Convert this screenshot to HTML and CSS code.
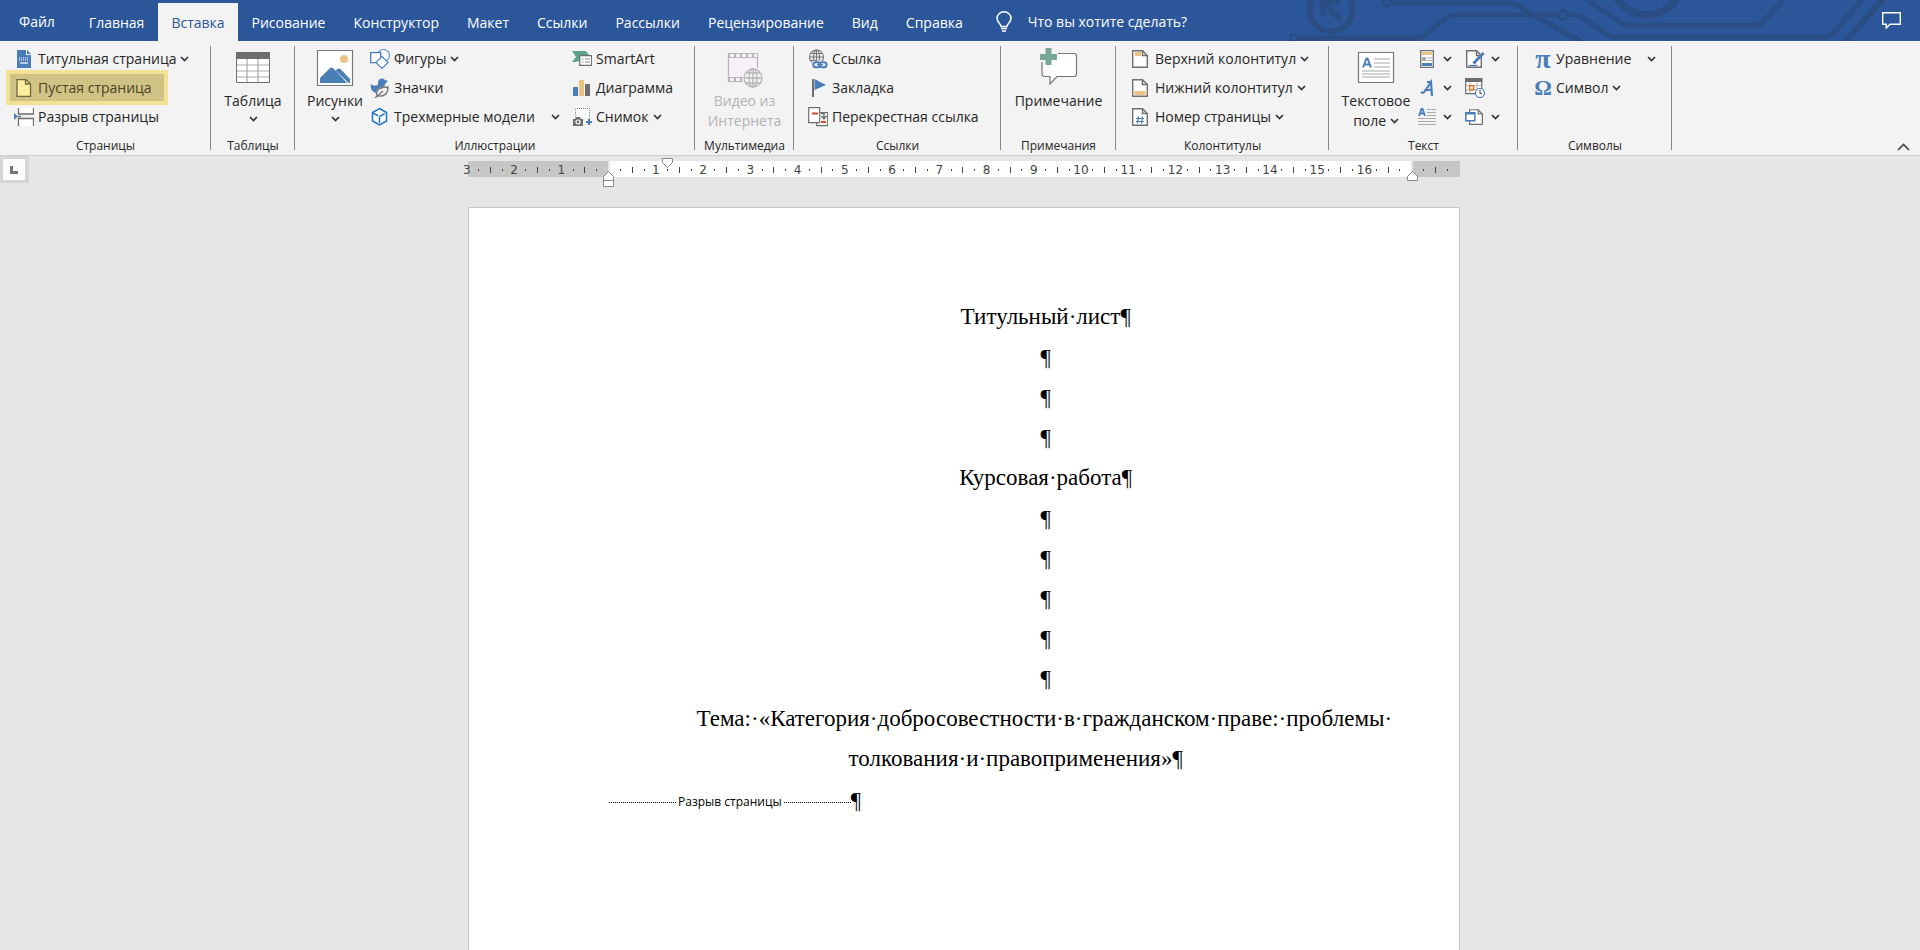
FILE: index.html
```
<!DOCTYPE html>
<html lang="ru">
<head>
<meta charset="utf-8">
<title>Курсовая работа</title>
<link rel="stylesheet" href="styles.css">
</head>
<body>
<svg class="defs" aria-hidden="true">
  <symbol id="chev" viewBox="0 0 9 6"><path d="M1 1l3.500 3.500L8 1" fill="none" stroke="#333" stroke-width="1.700"/></symbol>
  <symbol id="sheet" viewBox="0 0 16 18"><path d="M.7.700h9.800l4.800 4.800v11.800H.7z" fill="#fff" stroke="#6e6e6e" stroke-width="1.400"/><path d="M10.500.700v4.800h4.800" fill="none" stroke="#6e6e6e" stroke-width="1.400"/></symbol>
</svg>

<header class="titlebar">
  <svg class="circuit" viewBox="0 0 640 41" aria-hidden="true">
    <g fill="none" stroke="#2a4e84" stroke-width="5">
      <circle cx="51" cy="10" r="21.500" stroke-width="6"/>
      <path d="M61 20L43 2M43-4v20M40 2h20" stroke-width="6"/>
      <circle cx="107" cy="2" r="4" stroke-width="3"/>
      <path d="M112 3h116q6 0 12 4l63 36"/>
      <circle cx="14" cy="38" r="4" stroke-width="3"/>
      <path d="M19 38h122L166 18q5-3 9-3h102"/>
      <circle cx="283" cy="15" r="4.500" stroke-width="3.500"/>
      <path d="M289 15q10-1 17 5l25 17h214q4 0 6-2L583-1"/>
      <path d="M306-1l34 23q4 3 8 3h128q4 0 6-2L504-1"/>
      <circle cx="367" cy="-20" r="35" stroke-width="8"/>
      <path d="M603-1L565 42" stroke-width="6"/>
    </g>
  </svg>
  <nav class="tabs">
    <button class="tab tab-file">Файл</button>
    <button class="tab">Главная</button>
    <button class="tab active">Вставка</button>
    <button class="tab">Рисование</button>
    <button class="tab">Конструктор</button>
    <button class="tab">Макет</button>
    <button class="tab">Ссылки</button>
    <button class="tab">Рассылки</button>
    <button class="tab">Рецензирование</button>
    <button class="tab">Вид</button>
    <button class="tab">Справка</button>
  </nav>
  <button class="tell">
    <svg width="16" height="22" viewBox="0 0 16 22"><path d="M5 15.500c0-3-4-4-4-8.200a7 6.500 0 0 1 14 0c0 4.200-4 5.200-4 8.200z" fill="none" stroke="#fff" stroke-width="1.500"/><path d="M5 17.500h6M6 20h4" stroke="#fff" stroke-width="1.500"/></svg>
    <span>Что вы хотите сделать?</span>
  </button>
  <button class="comments" aria-label="Примечания">
    <svg width="19" height="17" viewBox="0 0 19 17"><path d="M.7.700h17.600v11.600H8l-3.800 3.800v-3.800H.7z" fill="none" stroke="#fff" stroke-width="1.400"/></svg>
  </button>
</header>

<section class="ribbon">
  <div class="group g-pages">
    <div class="body">
      <div class="rows">
        <button class="cmd"><svg width="20" height="20" viewBox="0 0 20 20"><path d="M3 1h9v5h5v13H3z" fill="#4a7ebb"/><path d="M13 1l4 4h-4z" fill="#4a7ebb"/><path d="M5 9h10M5 11h10" stroke="#fff" stroke-width="1.200" stroke-dasharray="1 1"/><path d="M6 14h8" stroke="#fff" stroke-width="1.200"/></svg>Титульная страница<svg class="chev"><use href="#chev"/></svg></button>
        <button class="cmd marked"><svg width="20" height="20" viewBox="0 0 20 20"><path d="M3 1.700h9l4.500 4.300v12.300H3z" fill="#ffef9f" stroke="#6e6845" stroke-width="1.300"/><path d="M11.500 1.700V6h5" fill="none" stroke="#6e6845" stroke-width="1.300"/></svg>Пустая страница</button>
        <button class="cmd"><svg width="20" height="20" viewBox="0 0 20 20"><path d="M0 6l4 3.500L0 13z" fill="#4a7ebb"/><path d="M5 1h14v6H5zM5 12h14v7H5z" fill="#fff"/><path d="M4.500 1v6h15V1M4.500 19v-7.500h15V19M4 9.500h3" fill="none" stroke="#6e6e6e" stroke-width="1.300"/></svg>Разрыв страницы</button>
      </div>
    </div>
    <h2>Страницы</h2>
  </div>

  <div class="group g-tables">
    <div class="body">
      <button class="big"><svg width="38" height="40" viewBox="0 0 38 40"><path d="M2.500 4.500h33v30h-33z" fill="#fff" stroke="#6e6e6e"/><path d="M2 4h34v7H2z" fill="#6e6e6e"/><path d="M3 17h32M3 23h32M3 29h32M13 11v23M24 11v23" stroke="#aaa" stroke-width="1.200"/></svg><span>Таблица</span><svg class="chev"><use href="#chev"/></svg></button>
    </div>
    <h2>Таблицы</h2>
  </div>

  <div class="group g-art">
    <div class="body">
      <button class="big"><svg width="38" height="40" viewBox="0 0 38 40"><path d="M1.500 2.500h35v35h-35z" fill="#fff" stroke="#777" stroke-width="1.200"/><circle cx="28" cy="11" r="4" fill="#eac282"/><path d="M4 35v-5l10-10q1.500-1 3 0l14 15zM19.500 22.500l2-1.500q1.500-1 3 0L34 31v4h-1.500z" fill="#4a7fb5"/></svg><span>Рисунки</span><svg class="chev"><use href="#chev"/></svg></button>
      <div class="rows col-shapes">
        <button class="cmd"><svg width="20" height="20" viewBox="0 0 20 20"><circle cx="13.500" cy="6.500" r="6" fill="#fff" stroke="#6b9ccb" stroke-width="1.200"/><path d="M.7 3.700h10v10H.7z" fill="#fff" stroke="#4a7ebb" stroke-width="1.300"/><path d="M12 7.500l6 6-6 6-6-6z" fill="#fff" stroke="#5b8cc4" stroke-width="1.300"/></svg>Фигуры<svg class="chev"><use href="#chev"/></svg></button>
        <button class="cmd"><svg width="20" height="20" viewBox="0 0 20 20"><path d="M1 6c2 2 4 2 7 1C7 1 12-1 15 2l3 1-3 3c0 2-1 3-3 3-4 1-6 3-6 6-4-1-6-5-5-9z" fill="#4a7ebb"/><path d="M7 18c-2-6 3-9 11-9 0 6-3 10-11 9M5 20l8-7" fill="#f3f3f3" stroke="#777" stroke-width="1.400"/></svg>Значки</button>
        <button class="cmd"><svg width="20" height="20" viewBox="0 0 20 20"><path d="M9.500 1.500L16.500 5.500v8.500l-7 4-7-4V5.500z" fill="#fff" stroke="#1e73be" stroke-width="1.500"/><path d="M3 6l6.500 3.500V17M9.500 9.500L16 6" fill="none" stroke="#1e73be" stroke-width="1.500" stroke-dasharray="6 2"/></svg>Трехмерные модели<svg class="chev far"><use href="#chev"/></svg></button>
      </div>
      <div class="rows">
        <button class="cmd"><svg width="20" height="20" viewBox="0 0 20 20"><path d="M0 2h14l3 4H7v6l-3 1H0l4-5z" fill="#5da38a"/><path d="M7.700 6.700h12v9.600h-12z" fill="#fff" stroke="#6e6e6e" stroke-width="1.300"/><path d="M10 10h1.500M13 10h5M10 13h1.500M13 13h5" stroke="#888"/></svg>SmartArt</button>
        <button class="cmd"><svg width="20" height="20" viewBox="0 0 20 20"><path d="M1 9h5v9H1z" fill="#4a7ebb"/><path d="M7 2h5v16H7z" fill="#eac282"/><path d="M13 6h5v12h-5z" fill="#6e6e6e"/></svg>Диаграмма</button>
        <button class="cmd"><svg width="20" height="20" viewBox="0 0 20 20"><path d="M3.500 10V1.500h14V12" fill="#fafafa" stroke="#888" stroke-dasharray="1 1"/><path d="M1 12h2l1-2h4l1 2h2v7H1z" fill="#6e6e6e"/><circle cx="6" cy="15" r="2" fill="#6e6e6e" stroke="#fff" stroke-width="1.200"/><path d="M14 15h6M17 12v6" stroke="#4a7ebb" stroke-width="2"/></svg>Снимок<svg class="chev"><use href="#chev"/></svg></button>
      </div>
    </div>
    <h2>Иллюстрации</h2>
  </div>

  <div class="group g-media">
    <div class="body">
      <button class="big" disabled><svg width="38" height="40" viewBox="0 0 38 40"><path d="M3.500 5.500h29v28h-29z" fill="#f7f1f7" stroke="#b8b4b8" stroke-width="1.200"/><path d="M3 7.500h30M3 31.500h15" stroke="#b8b4b8" stroke-width="5"/><path d="M5 7.500h27M5 31.500h13" stroke="#f7f1f7" stroke-width="3" stroke-dasharray="4 2"/><path d="M18 20h20v20H18z" fill="#f3f3f3"/><g fill="none" stroke="#b8b4b8" stroke-width="1.300"><circle cx="28" cy="30" r="9"/><ellipse cx="28" cy="30" rx="4" ry="9"/><path d="M19 30h18M21 25h14M21 35h14M28 21v18"/></g></svg><span>Видео из<br>Интернета</span></button>
    </div>
    <h2>Мультимедиа</h2>
  </div>

  <div class="group g-links">
    <div class="body">
      <div class="rows">
        <button class="cmd"><svg width="20" height="20" viewBox="0 0 20 20"><g fill="none" stroke="#777" stroke-width="1.200"><circle cx="8.500" cy="8" r="7"/><ellipse cx="8.500" cy="8" rx="3" ry="7"/><path d="M1.500 8h14M3 4.500h11M3 11.500h5M8.500 1v13"/></g><rect x="4" y="12" width="16" height="8" fill="#f3f3f3"/><rect x="5.200" y="13.200" width="7" height="5" rx="2.500" fill="none" stroke="#4a7ebb" stroke-width="2"/><rect x="11.500" y="13.200" width="7" height="5" rx="2.500" fill="none" stroke="#4a7ebb" stroke-width="2"/><path d="M9 15.700h6" stroke="#4a7ebb" stroke-width="1.500"/></svg>Ссылка</button>
        <button class="cmd"><svg width="20" height="20" viewBox="0 0 20 20"><path d="M5 1v18" stroke="#6e6e6e" stroke-width="2"/><path d="M6.500 1L18 7 6.500 12z" fill="#4a7ebb"/></svg>Закладка</button>
        <button class="cmd"><svg width="20" height="20" viewBox="0 0 20 20"><path d="M8.700 5.700h11v13h-11z" fill="#fff" stroke="#6e6e6e" stroke-width="1.200"/><path d="M.7.700h11v15H.7z" fill="#fff" stroke="#6e6e6e" stroke-width="1.200"/><path d="M4 6.500h6M13 15h5" stroke="#d24726" stroke-width="2"/><path d="M13 6.500h3V11M13.500 9l2.500 3 2.500-3" fill="none" stroke="#6e6e6e" stroke-width="1.400"/></svg>Перекрестная ссылка</button>
      </div>
    </div>
    <h2>Ссылки</h2>
  </div>

  <div class="group g-notes">
    <div class="body">
      <button class="big"><svg width="38" height="40" viewBox="0 0 38 40"><path d="M18 5.500h16q2.500 0 2.500 2.500v18q0 2.500-2.500 2.500H17l-7 7.500v-7.500H5q-3 0-3-2.500V14l6 4z" fill="#fff"/><path d="M18 5.500h16q2.500 0 2.500 2.500v18q0 2.500-2.500 2.500H17l-7 7.500v-7.500H5q-3 0-3-2.500V14" fill="none" stroke="#777" stroke-width="1.200"/><path d="M0 9h17M8.500 0v17" stroke="#76a797" stroke-width="6"/></svg><span>Примечание</span></button>
    </div>
    <h2>Примечания</h2>
  </div>

  <div class="group g-heads">
    <div class="body">
      <div class="rows">
        <button class="cmd"><svg width="20" height="20" viewBox="0 0 20 20"><use href="#sheet" x="1" y="1" width="16" height="18"/><path d="M4 3h6v4H4z" fill="#eac282"/></svg>Верхний колонтитул<svg class="chev"><use href="#chev"/></svg></button>
        <button class="cmd"><svg width="20" height="20" viewBox="0 0 20 20"><use href="#sheet" x="1" y="1" width="16" height="18"/><path d="M3.500 13h11v4h-11z" fill="#eac282"/></svg>Нижний колонтитул<svg class="chev"><use href="#chev"/></svg></button>
        <button class="cmd"><svg width="20" height="20" viewBox="0 0 20 20"><use href="#sheet" x="1" y="1" width="16" height="18"/><path d="M7.500 9.500l-1 7M11.500 9.500l-1 7M5 11.500h8M5 14.500h8" stroke="#4a7ebb" stroke-width="1.200"/></svg>Номер страницы<svg class="chev"><use href="#chev"/></svg></button>
      </div>
    </div>
    <h2>Колонтитулы</h2>
  </div>

  <div class="group g-text">
    <div class="body">
      <button class="big"><svg width="38" height="40" viewBox="0 0 38 40"><path d="M1.500 4.500h35v30h-35z" fill="#fff" stroke="#777" stroke-width="1.200"/><path d="M6 19.500l3.500-9h1l3.500 9M7.500 16.500h5" fill="none" stroke="#4a7ebb" stroke-width="2"/><path d="M17 11h16M17 15h16M17 19h16M5 23h28M5 26h28M5 29h28" stroke="#aaa" stroke-width="1.200"/></svg><span>Текстовое<br>поле <svg class="chev"><use href="#chev"/></svg></span></button>
      <div class="rows">
        <button class="cmd icon" aria-label="Экспресс-блоки"><svg width="20" height="20" viewBox="0 0 20 20"><path d="M3.700 1.700h12.600v16.600H3.700z" fill="#fff" stroke="#6e6e6e" stroke-width="1.300"/><path d="M5 3h10v3H5z" fill="#eac282"/><path d="M5 8h4v4H5z" fill="#aaa"/><path d="M10 9h5M10 11.500h5" stroke="#aaa"/><path d="M5 14h10v3H5z" fill="#4a7ebb"/></svg><svg class="chev"><use href="#chev"/></svg></button>
        <button class="cmd icon" aria-label="WordArt"><svg width="20" height="20" viewBox="0 0 20 20"><path d="M4 14q2 2 4-1l6-9 1 14M7 12.500l8-1M10 4h4" fill="none" stroke="#4a7ebb" stroke-width="2.200"/></svg><svg class="chev"><use href="#chev"/></svg></button>
        <button class="cmd icon" aria-label="Буквица"><svg width="20" height="20" viewBox="0 0 20 20"><path d="M2 9l2.500-7h1L8 9M3 6.500h4" fill="none" stroke="#4a7ebb" stroke-width="1.800"/><path d="M10 2.500h9M10 5.500h9M10 8.500h9M1 11.500h18M1 14.500h18M1 17.500h18" stroke="#aaa" stroke-width="1.200"/></svg><svg class="chev"><use href="#chev"/></svg></button>
      </div>
      <div class="rows">
        <button class="cmd icon" aria-label="Строка подписи"><svg width="20" height="20" viewBox="0 0 20 20"><use href="#sheet" x="1" y="1" width="16" height="18"/><path d="M8.500 14.500L18.500 4" stroke="#4a7ebb" stroke-width="3"/><path d="M3.500 16.500h9" stroke="#4a7ebb" stroke-width="1.300"/></svg><svg class="chev"><use href="#chev"/></svg></button>
        <button class="cmd icon" aria-label="Дата и время"><svg width="20" height="20" viewBox="0 0 20 20"><path d="M.7 1.700h16v14H.7z" fill="#fff" stroke="#6e6e6e" stroke-width="1.200"/><path d="M0 0h17.400v4H0z" fill="#6e6e6e"/><path d="M1 7.500h15M1 12h15M5 4v11M12 4v11" stroke="#bbb"/><path d="M4.700 7.700h4v4h-4z" fill="#fff" stroke="#e8731a" stroke-width="1.400"/><circle cx="15" cy="15" r="4.500" fill="#fff" stroke="#4a7ebb" stroke-width="1.200"/><path d="M15 12v3.500h2" fill="none" stroke="#444"/></svg></button>
        <button class="cmd icon" aria-label="Объект"><svg width="20" height="20" viewBox="0 0 20 20"><use href="#sheet" x="4" y="1" width="14" height="18"/><path d="M.8 5.800h9v8h-9z" fill="#fff" stroke="#4a7ebb" stroke-width="1.500"/><path d="M1 6.500h9" stroke="#4a7ebb" stroke-width="2"/></svg><svg class="chev"><use href="#chev"/></svg></button>
      </div>
    </div>
    <h2>Текст</h2>
  </div>

  <div class="group g-symbols">
    <div class="body">
      <div class="rows">
        <button class="cmd"><span class="glyph pi">π</span>Уравнение<svg class="chev far"><use href="#chev"/></svg></button>
        <button class="cmd"><span class="glyph">Ω</span>Символ<svg class="chev"><use href="#chev"/></svg></button>
      </div>
    </div>
    <h2>Символы</h2>
  </div>

  <button class="collapse" aria-label="Свернуть ленту"><svg width="13" height="8" viewBox="0 0 13 8"><path d="M1 7l5.500-5.500L12 7" fill="none" stroke="#444" stroke-width="1.600"/></svg></button>
</section>

<main class="workspace">
  <div class="ruler-row">
    <button class="tabstop" aria-label="Табуляция"><svg width="8" height="8" viewBox="0 0 8 8"><path d="M1.500 0v6.500H8" fill="none" stroke="#777" stroke-width="3"/></svg></button>
    <div class="ruler">
      <div class="band"></div>
      <div class="scale">
        <span class="cm"><b>3</b><i></i><u></u><i></i></span>
        <span class="cm"><b>2</b><i></i><u></u><i></i></span>
        <span class="cm"><b>1</b><i></i><u></u><i></i></span>
        <span class="cm"><b></b><i></i><u></u><i></i></span>
        <span class="cm"><b>1</b><i></i><u></u><i></i></span>
        <span class="cm"><b>2</b><i></i><u></u><i></i></span>
        <span class="cm"><b>3</b><i></i><u></u><i></i></span>
        <span class="cm"><b>4</b><i></i><u></u><i></i></span>
        <span class="cm"><b>5</b><i></i><u></u><i></i></span>
        <span class="cm"><b>6</b><i></i><u></u><i></i></span>
        <span class="cm"><b>7</b><i></i><u></u><i></i></span>
        <span class="cm"><b>8</b><i></i><u></u><i></i></span>
        <span class="cm"><b>9</b><i></i><u></u><i></i></span>
        <span class="cm"><b>10</b><i></i><u></u><i></i></span>
        <span class="cm"><b>11</b><i></i><u></u><i></i></span>
        <span class="cm"><b>12</b><i></i><u></u><i></i></span>
        <span class="cm"><b>13</b><i></i><u></u><i></i></span>
        <span class="cm"><b>14</b><i></i><u></u><i></i></span>
        <span class="cm"><b>15</b><i></i><u></u><i></i></span>
        <span class="cm"><b>16</b><i></i><u></u><i></i></span>
        <span class="cm"><b></b><i></i><u></u><i></i></span>
      </div>
      <svg class="marker first" width="11" height="10" viewBox="0 0 11 10"><path d="M.5.500h10v4l-5 5-5-5z" fill="#fff" stroke="#888"/></svg>
      <svg class="marker left" width="11" height="16" viewBox="0 0 11 16"><path d="M.5 15.500v-10l5-5 5 5v10zM.5 9.500h10" fill="#fff" stroke="#888"/></svg>
      <svg class="marker right" width="11" height="10" viewBox="0 0 11 10"><path d="M.5 9.500v-4l5-5 5 5v4z" fill="#fff" stroke="#888"/></svg>
    </div>
  </div>

  <article class="page">
    <p class="caption">Титульный·лист<span class="mark">¶</span></p>
    <p><span class="mark">¶</span></p>
    <p><span class="mark">¶</span></p>
    <p><span class="mark">¶</span></p>
    <p class="caption">Курсовая·работа<span class="mark">¶</span></p>
    <p><span class="mark">¶</span></p>
    <p><span class="mark">¶</span></p>
    <p><span class="mark">¶</span></p>
    <p><span class="mark">¶</span></p>
    <p><span class="mark">¶</span></p>
    <p>Тема:·«Категория·добросовестности·в·гражданском·праве:·проблемы<span class="mark">·</span><br>толкования·и·правоприменения»<span class="mark">¶</span></p>
    <div class="break"><span>Разрыв страницы</span><span class="mark">¶</span></div>
  </article>
</main>
</body>
</html>
```
FILE: styles.css
```
* { box-sizing: border-box; }

body {
  margin: 0;
  min-height: 100vh;
  display: flex;
  flex-direction: column;
  background: #e6e6e6;
  color: #262626;
  font: 14px/20px "Open Sans", "Noto Sans", sans-serif;
}

button {
  margin: 0;
  padding: 0;
  border: 0;
  background: none;
  color: inherit;
  font: inherit;
  white-space: nowrap;
}

svg { flex: none; }
.defs { position: absolute; width: 0; height: 0; }

/* Title bar */
.titlebar {
  position: relative;
  display: flex;
  align-items: stretch;
  height: 41px;
  padding-top: 3px;
  background: #2b579a;
  color: #fff;
}
.circuit { position: absolute; right: 0; top: 0; width: 640px; height: 41px; }
.tabs { display: flex; }
.tab { padding: 2px 14px 0; }
.tab-file { padding: 0 20px 1px 19px; }
.tab.active { padding: 2px 13px 0; background: #f3f3f3; color: #2b579a; }
.tell { display: flex; align-items: center; gap: 16px; padding: 0 0 1px 19px; }
.comments { position: relative; margin-left: auto; padding: 2px 19px 0 0; }

/* Ribbon */
.ribbon {
  display: flex;
  background: #f3f3f3;
  border-bottom: 1px solid #cfcfcf;
}
.group {
  display: flex;
  flex-direction: column;
  gap: 7px;
  padding: 3px 0 1px;
  background: linear-gradient(#8a8a8a, #8a8a8a) right 5px / 1px 104px no-repeat;
}
.group h2 {
  margin: 0;
  font-size: 12px;
  font-weight: 400;
  line-height: 16px;
  text-align: center;
}
.body { display: flex; }
.rows { display: grid; grid-template-rows: repeat(3, 29px); align-content: start; }
.cmd { display: flex; align-items: center; justify-self: start; gap: 4px; height: 29px; }
.chev { width: 9px; height: 6px; }
.cmd .far { margin-left: 12px; }
.cmd.icon { gap: 6px; }
.marked {
  height: 35px;
  margin: -3px 0 -3px -8px;
  padding: 0 12px 0 4px;
  border: 4px solid #f3e196;
  background: #d1c285;
  color: #4b4427;
}
.big { display: flex; flex-direction: column; align-items: center; height: 87px; padding-top: 4px; }
.big > span { margin-top: 3px; }
.big > .chev { margin-top: 5px; }
.big span .chev { vertical-align: 2px; }
.big:disabled { color: #b5b2b5; }
.glyph {
  width: 18px;
  color: #4a7ebb;
  font: bold 22px/24px "Liberation Serif", serif;
  text-align: center;
}
.pi { font-size: 28px; }

.g-pages { width: 211px; }
.g-pages .body { padding-left: 14px; }
.g-tables { width: 84px; }
.g-tables .body, .g-media .body, .g-notes .body { justify-content: center; }
.g-art { width: 400px; }
.g-art .body { padding-left: 12px; }
.g-art .big { width: 56px; }
.col-shapes { width: 202px; margin-left: 7px; }
.g-media { width: 99px; }
.g-links { width: 207px; }
.g-links .body { padding-left: 14px; }
.g-notes { width: 115px; }
.g-heads { width: 213px; }
.g-heads .body { padding-left: 15px; }
.g-text { width: 189px; }
.g-text .body { padding-left: 10px; }
.g-text .big { width: 74px; }
.g-text .rows { width: 44px; margin-left: 4px; }
.g-symbols { width: 154px; }
.g-symbols .body { padding-left: 16px; }
.collapse { align-self: flex-end; margin-left: auto; padding: 0 10px 4px 0; line-height: 8px; }
.collapse svg { display: block; }

/* Ruler */
.workspace { flex: 1; display: flex; flex-direction: column; }
.ruler-row { position: relative; display: flex; justify-content: center; padding: 5px 0 0 8px; }
.tabstop {
  position: absolute;
  left: 0;
  top: 0;
  display: grid;
  place-items: center;
  width: 29px;
  height: 27px;
  border: 3px solid #d6d6d6;
  border-width: 3px 4px 3px 3px;
  background: #fcfcfc;
}
.ruler { position: relative; width: 992px; height: 16px; }
.band {
  height: 16px;
  background: linear-gradient(90deg, #c6c6c6 140px, #e6e6e6 140px 142px, #fff 142px 943px, #e6e6e6 943px 945px, #c6c6c6 945px);
}
.scale {
  position: absolute;
  inset: 1px 7px 0 -7px;
  display: grid;
  grid-template-columns: repeat(21, minmax(0, 1fr));
  color: #444;
}
.cm { display: grid; grid-template-columns: repeat(4, minmax(0, 1fr)); place-items: center; }
.cm b { font: 12px/16px "DejaVu Sans", sans-serif; }
.cm i { width: 1px; height: 2px; background: #444; }
.cm u { width: 1px; height: 6px; background: #444; }
.marker { position: absolute; }
.first { left: 194px; top: -3px; }
.left { left: 135px; top: 10px; }
.right { left: 939px; top: 10px; }

/* Document */
.page {
  flex: 1;
  align-self: center;
  width: 992px;
  margin: 30px 0 0 8px;
  padding: 89px 47px 40px 140px;
  border: 1px solid #c6c6c6;
  border-bottom: 0;
  background: #fff;
  color: #000;
  font: 23px/40px "Liberation Serif", serif;
}
.page p { margin: 0; text-align: center; text-indent: 60px; }
.page .caption { margin-bottom: 1px; }
.mark { display: inline-block; width: 0; text-indent: 0; text-align: left; }
.break { display: flex; align-items: center; margin-top: 1px; }
.break > span:first-child {
  display: flex;
  align-items: center;
  gap: 2px;
  padding-top: 2px;
  font: 12px/40px "Open Sans", sans-serif;
}
.break > span:first-child::before,
.break > span:first-child::after { content: ""; width: 67px; border-top: 1px dotted #000; }
```
